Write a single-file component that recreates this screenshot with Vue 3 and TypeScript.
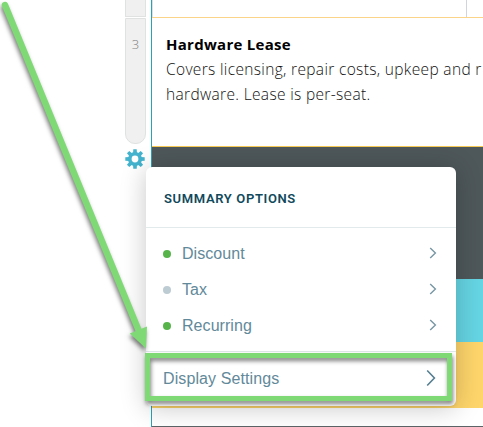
<script setup lang="ts">
interface Option {
  label: string
  active: boolean
}

const options: Option[] = [
  { label: 'Discount', active: true },
  { label: 'Tax', active: false },
  { label: 'Recurring', active: true },
]

const teeth: number[] = [0, 45, 90, 135, 180, 225, 270, 315]
</script>

<template>
  <div class="screen">
    <aside class="gutter">
      <div class="handle handle-prev"></div>
      <div class="handle handle-current"><span>3</span></div>
      <svg class="gear" viewBox="0 0 20 20" width="20" height="20">
        <g fill="#43b3ce">
          <path
            v-for="angle in teeth"
            :key="angle"
            d="M8 4.5 8.3 0.3H11.7L12 4.5Z"
            :transform="`rotate(${angle} 10 10)`"
          />
        </g>
        <circle cx="10" cy="10" r="5.2" fill="none" stroke="#43b3ce" stroke-width="3.6" />
      </svg>
    </aside>

    <main class="sheet">
      <div class="row-prev"><div class="cell"></div></div>
      <section class="row-item">
        <h2>Hardware Lease</h2>
        <p>Covers licensing, repair costs, upkeep and r</p>
        <p>hardware. Lease is per-seat.</p>
      </section>
      <div class="band dark"></div>
      <div class="band aqua"></div>
      <div class="band amber"></div>
      <div class="footer-gap"></div>
    </main>

    <div class="popup">
      <header>SUMMARY OPTIONS</header>
      <ul>
        <li v-for="option in options" :key="option.label">
          <i class="dot" :class="{ on: option.active }"></i>
          <span>{{ option.label }}</span>
          <svg class="chev" viewBox="0 0 8 12" width="8" height="12">
            <path d="M1.2 1 6.4 6 1.2 11" />
          </svg>
        </li>
      </ul>
      <div class="settings">
        <span>Display Settings</span>
        <svg class="chev" viewBox="0 0 10 18" width="10" height="18">
          <path d="M1.2 1.5 8.4 9 1.2 16.5" />
        </svg>
      </div>
    </div>

    <div class="highlight"></div>
    <svg class="arrow" viewBox="0 0 170 360" width="170" height="360">
      <path d="M5 5 138.5 330" stroke="#7fda75" stroke-width="6.4" stroke-linecap="round" />
      <path d="M146 348.5 129.8 333.5 147 326.5Z" fill="#7fda75" />
    </svg>
  </div>
</template>

<style>
body {
  margin: 0;
  background: #fff;
}
</style>

<style scoped>
.screen {
  position: relative;
  display: flex;
  width: 483px;
  height: 427px;
  overflow: hidden;
  background: #fff;
  font-family: "Liberation Sans", Arial, sans-serif;
}
.gutter {
  box-sizing: border-box;
  width: 151px;
  padding-left: 125px;
  flex: none;
}
.handle {
  box-sizing: border-box;
  width: 21px;
  background: #f0f0f0;
  border: 1px solid #e0e2e2;
}
.handle-prev {
  height: 17px;
  border-top: 0;
}
.handle-current {
  height: 126px;
  margin-top: 1px;
  border-radius: 0 0 10px 10px;
  text-align: center;
  font: 300 13px/50px "Open Sans", sans-serif;
  color: #808080;
}
.gear {
  display: block;
  margin-top: 5px;
}
.sheet {
  box-sizing: border-box;
  flex: none;
  width: 332px;
  height: 427px;
  border-left: 1px solid #25a3b8;
}
.row-prev {
  box-sizing: border-box;
  height: 18px;
  border-bottom: 1px solid #fbd489;
}
.cell {
  width: 313px;
  height: 17px;
  border-left: 1px solid #dce1e3;
  border-right: 1px solid #ced6d9;
}
.row-item {
  box-sizing: border-box;
  height: 129px;
  padding: 14px 0 0 14px;
  border-bottom: 1px solid #f6ca55;
  white-space: nowrap;
  overflow: hidden;
}
.row-item h2 {
  margin: 0;
  font: 700 15px/25px "Open Sans", sans-serif;
  letter-spacing: 0.28px;
  color: #000;
}
.row-item p {
  margin: 0;
  font: 300 15.5px/25px "Open Sans", sans-serif;
  letter-spacing: 0.34px;
  color: #111;
}
.band.dark {
  height: 132px;
  background: #4e575a;
}
.band.aqua {
  height: 63px;
  background: #65d4e3;
}
.band.amber {
  height: 66px;
  background: #fed56b;
}
.footer-gap {
  height: 18px;
  border-bottom: 1px solid #5d6467;
}
.popup {
  position: absolute;
  left: 146px;
  top: 167px;
  width: 310px;
  height: 239px;
  border-radius: 6px;
  background: #fff;
  box-shadow: 0 2px 26px rgba(0, 0, 0, 0.22);
  color: #62899a;
}
.popup header {
  box-sizing: border-box;
  height: 61px;
  padding-left: 18px;
  border-bottom: 1px solid #e3eaec;
  font: 600 13px/63px Roboto, sans-serif;
  letter-spacing: 0.64px;
  color: #10495c;
}
.popup ul {
  box-sizing: border-box;
  height: 124px;
  margin: 0;
  padding: 8px 19px 0 17px;
  border-bottom: 1px solid #dfe7e9;
  list-style: none;
}
.popup li {
  display: flex;
  align-items: center;
  height: 36px;
  font-size: 16px;
  letter-spacing: 0.06px;
}
.dot {
  width: 8px;
  height: 8px;
  margin-right: 11px;
  border-radius: 50%;
  background: #bdcbd3;
}
.dot.on {
  background: #56b44b;
}
.chev {
  margin-left: auto;
  fill: none;
  stroke: #7796a3;
  stroke-width: 1.4;
}
.popup li .chev {
  margin-bottom: 2px;
}
.settings {
  display: flex;
  align-items: center;
  height: 53px;
  padding: 0 20px 0 17px;
  font-size: 16px;
  letter-spacing: 0.1px;
}
.settings .chev {
  margin-bottom: 2px;
  stroke: #557f91;
  stroke-width: 1.6;
}
.highlight {
  position: absolute;
  left: 145px;
  top: 353px;
  box-sizing: border-box;
  width: 307px;
  height: 48px;
  border: 5px solid #7fda75;
  filter: drop-shadow(1px 3px 2px rgba(0, 0, 0, 0.5));
}
.arrow {
  position: absolute;
  left: 0;
  top: 0;
  fill: none;
  filter: drop-shadow(-1px 3px 2px rgba(0, 0, 0, 0.5));
}
</style>
